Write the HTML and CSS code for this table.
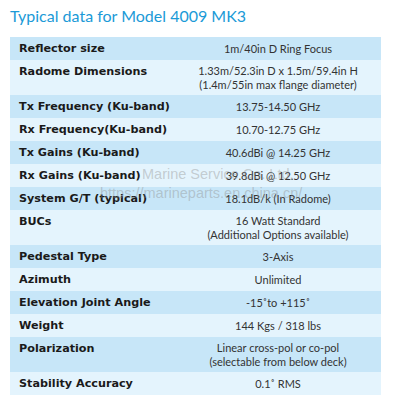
FILE: index.html
```html
<!DOCTYPE html>
<html lang="en">
<head>
    <meta charset="UTF-8">
    <meta name="viewport" content="width=device-width, initial-scale=1.0">
    <title>Model 4009 MK3</title>
    <link rel="stylesheet" href="styles.css">
</head>
<body>
    <div class="sheet">
        <h1 class="title">Typical data for Model 4009 MK3</h1>
        <table class="specs">
            <tr><th>Reflector size</th><td>1m/40in D Ring Focus</td></tr>
            <tr class="tall"><th>Radome Dimensions</th><td>1.33m/52.3in D x 1.5m/59.4in H<br>(1.4m/55in max flange diameter)</td></tr>
            <tr><th>Tx Frequency (Ku-band)</th><td>13.75-14.50 GHz</td></tr>
            <tr><th>Rx Frequency(Ku-band)</th><td>10.70-12.75 GHz</td></tr>
            <tr><th>Tx Gains (Ku-band)</th><td>40.6dBi @ 14.25 GHz</td></tr>
            <tr><th>Rx Gains (Ku-band)</th><td>39.8dBi @ 12.50 GHz</td></tr>
            <tr><th>System G/T (typical)</th><td>18.1dB/k (In Radome)</td></tr>
            <tr class="tall"><th>BUCs</th><td>16 Watt Standard<br>(Additional Options available)</td></tr>
            <tr><th>Pedestal Type</th><td>3-Axis</td></tr>
            <tr><th>Azimuth</th><td>Unlimited</td></tr>
            <tr><th>Elevation Joint Angle</th><td>-15&#730;to +115&#730;</td></tr>
            <tr><th>Weight</th><td>144 Kgs / 318 lbs</td></tr>
            <tr class="tall"><th>Polarization</th><td>Linear cross-pol or co-pol<br>(selectable from below deck)</td></tr>
            <tr><th>Stability Accuracy</th><td>0.1&#730; RMS</td></tr>
        </table>
        <div class="watermark">
            <span class="wm-name">Marine Service Co.,Ltd.</span>
            <span>https://marineparts.en.china.cn/</span>
        </div>
    </div>
</body>
</html>
```

FILE: styles.css
```css
* {
    margin: 0;
    padding: 0;
    box-sizing: border-box;
}

body {
    background: #fff;
    width: 401px;
    height: 402px;
    overflow: hidden;
}

.sheet {
    position: relative;
    padding: 4px 20px 0 10px;
}

.title {
    font-family: Lato, "Open Sans", sans-serif;
    font-weight: 400;
    font-size: 16px;
    line-height: 24px;
    color: #1b9ad7;
    height: 33px;
}

.specs {
    width: 371px;
    border-collapse: collapse;
}

.specs tr:nth-child(odd) {
    background: #c7e6f8;
}

.specs tr:nth-child(even) {
    background: #e4f4fd;
}

.specs th {
    width: 165px;
    text-align: left;
    vertical-align: top;
    font-family: "DejaVu Sans", sans-serif;
    font-weight: bold;
    font-size: 11.2px;
    line-height: 15px;
    color: #1a1a1a;
    padding: 4px 0 3px 9px;
}

.specs td {
    text-align: center;
    vertical-align: middle;
    font-family: Lato, sans-serif;
    font-size: 11px;
    line-height: 14px;
    color: #333;
    padding: 3px 0;
    height: 23px;
}

.specs tr.tall td {
    height: 35px;
}

.watermark {
    position: absolute;
    left: 100px;
    top: 165px;
    display: flex;
    flex-direction: column;
    font-family: "Liberation Sans", sans-serif;
    font-size: 14.5px;
    line-height: 19px;
    color: rgba(140, 140, 140, 0.4);
    pointer-events: none;
}

.wm-name {
    margin-left: 42px;
}
```
